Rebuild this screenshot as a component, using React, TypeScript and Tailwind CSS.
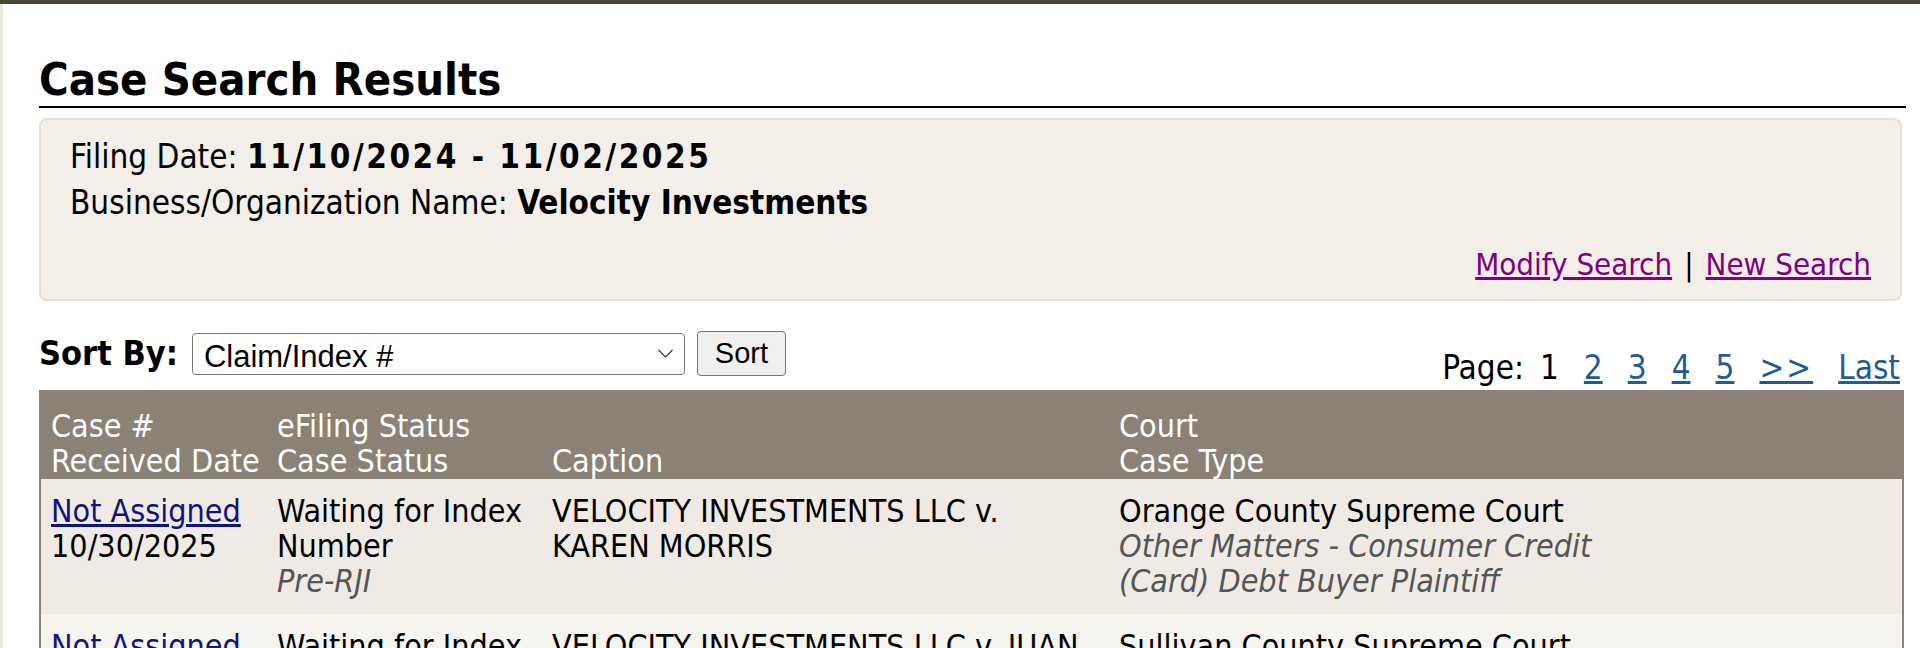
import React from 'react'

type CaseRow = {
  caseNo: string
  received: string
  efiling: string
  status: string
  caption: string
  court: string
  caseType: string
}

const rows: CaseRow[] = [
  {
    caseNo: 'Not Assigned',
    received: '10/30/2025',
    efiling: 'Waiting for Index Number',
    status: 'Pre-RJI',
    caption: 'VELOCITY INVESTMENTS LLC v. KAREN MORRIS',
    court: 'Orange County Supreme Court',
    caseType: 'Other Matters - Consumer Credit (Card) Debt Buyer Plaintiff',
  },
  {
    caseNo: 'Not Assigned',
    received: '10/29/2025',
    efiling: 'Waiting for Index Number',
    status: 'Pre-RJI',
    caption: 'VELOCITY INVESTMENTS LLC v. JUAN RIVERA',
    court: 'Sullivan County Supreme Court',
    caseType: 'Other Matters - Consumer Credit (Card) Debt Buyer Plaintiff',
  },
]

const pages = ['2', '3', '4', '5']

export default function App() {
  return (
    <div className="min-h-screen bg-white font-['DejaVu_Sans_Condensed','DejaVu_Sans',sans-serif] text-black">
      {/* top bar */}
      <div className="h-[4px] bg-[#4a4434]" />

      <div className="flex">
        <div className="w-[3px] shrink-0 bg-[#ebe7db]" />

        <div className="flex-1 pl-[36px] pr-[14px]">
          {/* Heading */}
          <h1 className="border-b-2 border-black pb-[1px] pt-[51px] text-[45px] font-bold leading-[50px]">
            Case Search Results
          </h1>

          {/* Search criteria */}
          <div className="mr-[4px] mt-[10px] rounded-lg border-2 border-[#e4dfcf] bg-[#f3efe8] px-[29px] pb-[12px] pt-[14px] text-[33px] leading-[46px]">
            <div>
              Filing Date: <span className="font-bold tracking-[2.5px]">11/10/2024 - 11/02/2025</span>
            </div>
            <div>
              Business/Organization Name: <span className="font-bold">Velocity Investments</span>
            </div>
            <div className="mt-[15px] flex justify-end gap-[12px] text-[31px]">
              <a href="#" className="text-[#800080] underline">Modify Search</a>
              <span>|</span>
              <a href="#" className="text-[#800080] underline">New Search</a>
            </div>
          </div>

          {/* Sort + paging */}
          <div className="mt-[27px] flex items-end justify-between">
            <div className="mb-[11px] flex items-center">
              <span className="mr-[14px] text-[34px] font-bold">Sort By:</span>
              <div className="relative">
                <select
                  defaultValue="claim"
                  className="h-[42px] w-[493px] appearance-none rounded-[4px] border border-[#767676] bg-white pl-[11px] font-['Liberation_Sans',Arial,sans-serif] text-[31px] text-black"
                >
                  <option value="claim">Claim/Index #</option>
                  <option value="date">Received Date</option>
                  <option value="court">Court</option>
                </select>
                <svg
                  className="pointer-events-none absolute right-[12px] top-[16px]"
                  width="15"
                  height="9"
                  viewBox="0 0 15 9"
                  fill="none"
                  stroke="#333"
                  strokeWidth="1.2"
                >
                  <path d="M0.5 1l7 7 7-7" />
                </svg>
              </div>
              <button className="ml-[12px] h-[45px] w-[89px] rounded-[4px] border border-[#767676] bg-[#efefef] font-['Liberation_Sans',Arial,sans-serif] text-[29px]">
                Sort
              </button>
            </div>

            <div className="mb-[5px] mr-[6px] flex gap-[25px] text-[33px] leading-[35px]">
              <span className="mr-[-9px]">Page:</span>
              <span>1</span>
              {pages.map((p) => (
                <a key={p} href="#" className="text-[#1f5b95] underline">{p}</a>
              ))}
              <a href="#" className="tracking-[2px] text-[#1f5b95] underline">&gt;&gt;</a>
              <a href="#" className="text-[#1f5b95] underline">Last</a>
            </div>
          </div>

          {/* Results table */}
          <div className="mr-[2px] border-x-2 border-t-2 border-[#8b8175] text-[32px] leading-[35px]">
            <div className="grid grid-cols-[226px_275px_567px_1fr] bg-[#8b8175] pt-[17px] text-white">
              <div className="pl-[10px]">
                <div>Case #</div>
                <div>Received Date</div>
              </div>
              <div className="pl-[10px]">
                <div>eFiling Status</div>
                <div>Case Status</div>
              </div>
              <div className="flex items-end pl-[10px]">Caption</div>
              <div className="pl-[10px]">
                <div>Court</div>
                <div>Case Type</div>
              </div>
            </div>

            {rows.map((r, i) => (
              <div
                key={i}
                className={`grid grid-cols-[226px_275px_567px_1fr] py-[15px] ${i % 2 === 0 ? 'bg-[#efebe4]' : 'bg-[#f6f4ef]'}`}
              >
                <div className="pl-[10px]">
                  <a href="#" className="text-[#13137f] underline">{r.caseNo}</a>
                  <div>{r.received}</div>
                </div>
                <div className="pl-[10px]">
                  <div>{r.efiling}</div>
                  <div className="italic text-[#555]">{r.status}</div>
                </div>
                <div className="pl-[10px] pr-[17px]">{r.caption}</div>
                <div className="pl-[10px] pr-[20px]">
                  <div>{r.court}</div>
                  <div className="max-w-[510px] italic text-[#555]">{r.caseType}</div>
                </div>
              </div>
            ))}
          </div>
        </div>
      </div>
    </div>
  )
}
